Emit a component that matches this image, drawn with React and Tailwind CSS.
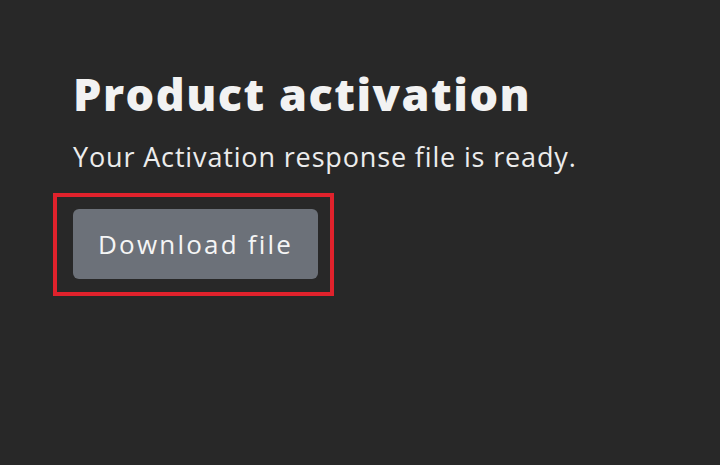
export default function App() {
  return (
    <div className="min-h-[465px] w-full bg-[#282828] pl-[73px] pt-[66px] text-[#f2f2f2] [font-family:'Open_Sans',sans-serif]">
      <h1 className="text-[45px] font-extrabold leading-[56px] tracking-[1.5px]">Product activation</h1>
      <p className="mt-[18px] text-[27px] leading-[34px] tracking-[0.85px] text-[#ececec]">Your Activation response file is ready.</p>
      <div className="-ml-[20px] mt-[19px] w-fit border-4 border-[#e0222c] pb-[13px] pl-[16px] pr-[12px] pt-[12px]">
        <button className="h-[70px] w-[245px] rounded-[6px] bg-[#6c7179] text-[26px] tracking-[2.2px] text-[#f5f5f5]">
          Download file
        </button>
      </div>
    </div>
  )
}
